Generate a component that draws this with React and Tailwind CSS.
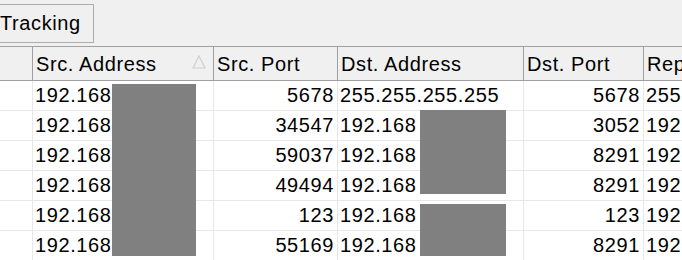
import React from "react";

const rows = [
  ["192.168", "5678", "255.255.255.255", "5678", "255"],
  ["192.168", "34547", "192.168", "3052", "192"],
  ["192.168", "59037", "192.168", "8291", "192"],
  ["192.168", "49494", "192.168", "8291", "192"],
  ["192.168", "123", "192.168", "123", "192"],
  ["192.168", "55169", "192.168", "8291", "192"],
];

const font = { fontFamily: '"Liberation Sans", Arial, sans-serif' };

export default function App() {
  return (
    <div
      className="w-[682px] h-[260px] overflow-hidden bg-[#f0f0f0] text-[20px] tracking-[0.6px] text-black"
      style={font}
    >
      <div className="h-[46px] flex items-start pt-[4px]">
        <div className="ml-[-8px] w-[102px] h-[39px] shrink-0 border border-[#adadad] bg-[#f0f0f0] flex items-center pl-[7px] pb-[2px]">
          Tracking
        </div>
      </div>
      <div className="relative bg-white">
        <div className="flex h-[35px] bg-[#f0f0f0] border-y border-[#a0a0a0]">
          <div className="w-[33px] shrink-0 border-r border-[#a0a0a0]" />
          <div className="w-[181px] shrink-0 border-r border-[#a0a0a0] flex items-center pl-[3px] relative">
            Src. Address
            <svg className="absolute left-[159px] top-[8px]" width="14" height="14" viewBox="0 0 14 14">
              <path d="M7 1 L13 13 L1 13 Z" fill="none" stroke="#cfcfcf" strokeWidth="1.2" />
            </svg>
          </div>
          <div className="w-[124px] shrink-0 border-r border-[#a0a0a0] flex items-center pl-[3px]">Src. Port</div>
          <div className="w-[186px] shrink-0 border-r border-[#a0a0a0] flex items-center pl-[3px]">Dst. Address</div>
          <div className="w-[120px] shrink-0 border-r border-[#a0a0a0] flex items-center pl-[3px]">Dst. Port</div>
          <div className="flex-1 min-w-0 overflow-hidden flex items-center pl-[3px] whitespace-nowrap">Reply</div>
        </div>
        {rows.map((r, i) => (
          <div key={i} className="flex h-[30px] border-b border-[#e8e8e8] leading-[28px]">
            <div className="w-[33px] shrink-0 border-r border-[#e8e8e8]" />
            <div className="w-[181px] shrink-0 border-r border-[#e8e8e8] pl-[2px] whitespace-nowrap overflow-hidden">{r[0]}</div>
            <div className="w-[124px] shrink-0 border-r border-[#e8e8e8] pr-[3px] text-right">{r[1]}</div>
            <div className="w-[186px] shrink-0 border-r border-[#e8e8e8] pl-[2px] whitespace-nowrap overflow-hidden">{r[2]}</div>
            <div className="w-[120px] shrink-0 border-r border-[#e8e8e8] pr-[3px] text-right">{r[3]}</div>
            <div className="flex-1 min-w-0 pl-[2px] whitespace-nowrap overflow-hidden">{r[4]}</div>
          </div>
        ))}
        <div className="absolute left-[112px] top-[38px] w-[84px] h-[172px] bg-[#808080]" />
        <div className="absolute left-[420px] top-[64px] w-[86px] h-[84px] bg-[#808080]" />
        <div className="absolute left-[420px] top-[158px] w-[86px] h-[52px] bg-[#808080]" />
      </div>
    </div>
  );
}
